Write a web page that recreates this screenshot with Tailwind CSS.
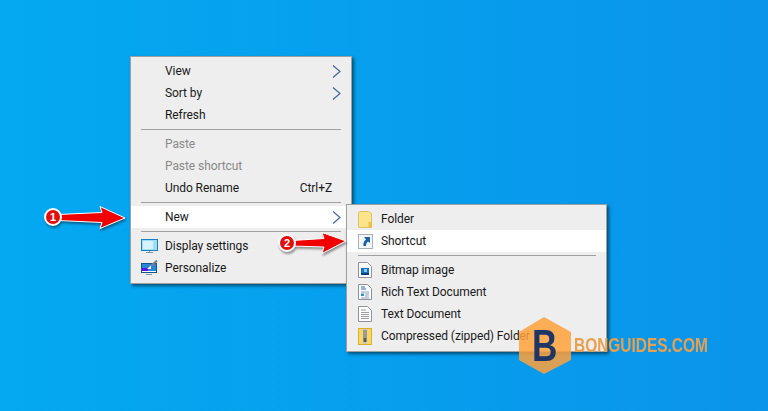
<!DOCTYPE html>
<html lang="en">
<head>
  <meta charset="UTF-8" />
  <title>New Shortcut</title>
  <script src="https://cdn.jsdelivr.net/npm/@tailwindcss/browser@4"></script>
</head>
<body class="m-0">
  <div class="relative w-[768px] h-[411px] overflow-hidden bg-linear-to-r from-[#04a9f1] to-[#0a94ea] font-['Roboto',sans-serif] text-[12px] tracking-[-0.08px] text-[#1a1a1a]">

    <!-- Desktop context menu -->
    <div class="absolute left-[130px] top-[56px] w-[222px] h-[228px] flex flex-col py-[3px] bg-[#eeeeee] border border-[#a0a0a0] shadow-[2px_2px_3px_rgba(0,0,0,0.5)]">
      <div class="flex items-center h-[22px] shrink-0 pl-[34px] pr-[10px] justify-between">
        <span>View</span>
        <svg width="9" height="13" viewBox="0 0 9 13" fill="none"><path d="M1 .5 8 6.5 1 12.5" stroke="#44689a" stroke-width="1.2"/></svg>
      </div>
      <div class="flex items-center h-[22px] shrink-0 pl-[34px] pr-[10px] justify-between">
        <span>Sort by</span>
        <svg width="9" height="13" viewBox="0 0 9 13" fill="none"><path d="M1 .5 8 6.5 1 12.5" stroke="#44689a" stroke-width="1.2"/></svg>
      </div>
      <div class="flex items-center h-[22px] shrink-0 pl-[34px]">Refresh</div>
      <div class="h-[7px] shrink-0 flex items-center pl-[10px] pr-[10px]"><div class="w-full h-px bg-[#a0a0a0]"></div></div>
      <div class="flex items-center h-[22px] shrink-0 pl-[34px] text-[#8a8a8a]">Paste</div>
      <div class="flex items-center h-[22px] shrink-0 pl-[34px] text-[#8a8a8a]">Paste shortcut</div>
      <div class="flex items-center h-[22px] shrink-0 pl-[34px] pr-[19px] justify-between">
        <span>Undo Rename</span>
        <span>Ctrl+Z</span>
      </div>
      <div class="h-[7px] shrink-0 flex items-center pl-[10px] pr-[10px]"><div class="w-full h-px bg-[#a0a0a0]"></div></div>
      <div class="flex items-center h-[22px] shrink-0 pl-[34px] pr-[10px] justify-between bg-white">
        <span>New</span>
        <svg width="9" height="13" viewBox="0 0 9 13" fill="none"><path d="M1 .5 8 6.5 1 12.5" stroke="#44689a" stroke-width="1.2"/></svg>
      </div>
      <div class="h-[7px] shrink-0 flex items-center pl-[10px] pr-[10px]"><div class="w-full h-px bg-[#a0a0a0]"></div></div>
      <div class="flex items-center h-[22px] shrink-0 pl-[10px]">
        <span class="w-[24px] shrink-0 flex">
          <svg width="17" height="15" viewBox="0 0 17 15">
            <rect x=".5" y=".5" width="16" height="11" fill="#9fdcf8" stroke="#1c7fc0"/>
            <rect x="2" y="2" width="10" height="8" fill="#d8f2fd"/>
            <path d="M5 13.500h7M8.500 12v1" stroke="#7d93a6"/>
          </svg>
        </span>
        <span>Display settings</span>
      </div>
      <div class="flex items-center h-[22px] shrink-0 pl-[10px]">
        <span class="w-[24px] shrink-0 flex">
          <svg width="17" height="16" viewBox="0 0 17 16">
            <rect x=".5" y="3.500" width="15" height="9" fill="#2a86d8" stroke="#14548f"/>
            <rect x="1" y="8" width="6" height="4" fill="#5a10e0"/>
            <path d="M1 11.500h14" stroke="#ffffff"/>
            <path d="M6 9 10 5.500 10 9z" fill="#ffffff"/>
            <path d="M10 6 16 .5" stroke="#7b7f86" stroke-width="2"/>
            <path d="M5 14.500h6" stroke="#7d93a6"/>
          </svg>
        </span>
        <span>Personalize</span>
      </div>
    </div>

    <!-- New submenu -->
    <div class="absolute left-[346px] top-[204px] w-[261px] h-[148px] flex flex-col py-[3px] bg-[#eeeeee] border border-[#a0a0a0] shadow-[2px_2px_3px_rgba(0,0,0,0.5)]">
      <div class="flex items-center h-[22px] shrink-0 pl-[11px]">
        <span class="w-[23px] shrink-0 flex">
          <svg width="15" height="17" viewBox="0 0 15 17">
            <path d="M.5 1.500 1.500.5h9l3 2v14H.5z" fill="#fce48a" stroke="#dcc06a"/>
            <rect x="10.500" y="11" width="3" height="5.500" fill="#f0c040"/>
          </svg>
        </span>
        <span>Folder</span>
      </div>
      <div class="flex items-center h-[22px] shrink-0 pl-[11px] bg-white">
        <span class="w-[23px] shrink-0 flex">
          <svg width="15" height="15" viewBox="0 0 15 15">
            <rect x=".5" y=".5" width="14" height="14" fill="#f4f6f8" stroke="#a8b0ba"/>
            <path d="M6 3h6v6l-2-1.600C8.500 8.500 8 10 8 12H5.500C5 9 6 7 8 5.500z" fill="#1c5fa8"/>
          </svg>
        </span>
        <span>Shortcut</span>
      </div>
      <div class="h-[7px] shrink-0 flex items-center pl-[11px] pr-[10px]"><div class="w-full h-px bg-[#a0a0a0]"></div></div>
      <div class="flex items-center h-[22px] shrink-0 pl-[11px]">
        <span class="w-[23px] shrink-0 flex">
          <svg width="14" height="16" viewBox="0 0 14 16">
            <path d="M.5.5h9l4 4v11H.5z" fill="#fbfbfb" stroke="#8c939c"/>
            <rect x="3" y="6" width="8" height="7" fill="#1a6fc4"/>
            <rect x="6" y="7" width="3" height="3" fill="#7fd0f5"/>
            <rect x="3" y="11" width="8" height="2" fill="#0d3d7a"/>
          </svg>
        </span>
        <span>Bitmap image</span>
      </div>
      <div class="flex items-center h-[22px] shrink-0 pl-[11px]">
        <span class="w-[23px] shrink-0 flex">
          <svg width="14" height="16" viewBox="0 0 14 16">
            <path d="M.5.5h9l4 4v11H.5z" fill="#fbfbfb" stroke="#8c939c"/>
            <path d="M3 3h4M3 5h5" stroke="#2a6fc0"/>
            <path d="M3 8h8" stroke="#8aa0b8"/>
            <rect x="3" y="9.500" width="3" height="2.500" fill="#2a8fd8"/>
            <path d="M7 10h4M7 12h4M3 14h8" stroke="#8aa0b8"/>
          </svg>
        </span>
        <span>Rich Text Document</span>
      </div>
      <div class="flex items-center h-[22px] shrink-0 pl-[11px]">
        <span class="w-[23px] shrink-0 flex">
          <svg width="14" height="16" viewBox="0 0 14 16">
            <path d="M.5.5h9l4 4v11H.5z" fill="#fbfbfb" stroke="#8c939c"/>
            <path d="M3 4h5M3 6.500h8M3 8.500h8M3 10.500h8M3 12.500h8" stroke="#9aa0a6"/>
          </svg>
        </span>
        <span>Text Document</span>
      </div>
      <div class="flex items-center h-[22px] shrink-0 pl-[11px]">
        <span class="w-[23px] shrink-0 flex">
          <svg width="14" height="17" viewBox="0 0 14 17">
            <rect x=".5" y=".5" width="13" height="16" fill="#f8d860" stroke="#d8b030"/>
            <rect x="5" y="1" width="4" height="15" fill="#c4c8cc"/>
            <path d="M5 3h4M5 5h4M5 7h4M5 9h4" stroke="#6a6e72"/>
            <rect x="5.500" y="10" width="3" height="4" fill="#55595d"/>
          </svg>
        </span>
        <span>Compressed (zipped) Folder</span>
      </div>
    </div>

    <!-- Callout arrows -->
    <svg class="absolute left-0 top-0" width="768" height="411" viewBox="0 0 768 411" style="filter:drop-shadow(1px 2px 1px rgba(0,0,0,.4))">
      <path d="M58 214.500 102 212.500 100 206.500 125 218 100 228.500 102 222.500 58 220.500z" fill="#f00000" stroke="#ffffff" stroke-width="1"/>
      <circle cx="53" cy="217" r="8" fill="#e01010" stroke="#ffffff" stroke-width="2"/>
      <path d="M292 240.500 324 238.500 322 232.500 346 241 322 253.500 324 247 292 246z" fill="#f00000" stroke="#ffffff" stroke-width="1"/>
      <circle cx="287" cy="243" r="8" fill="#e01010" stroke="#ffffff" stroke-width="2"/>
    </svg>
    <span class="absolute left-[49px] top-[209px] w-[8px] h-[16px] leading-[16px] text-center text-[11px] font-bold text-white font-['Liberation_Sans',sans-serif]">1</span>
    <span class="absolute left-[283px] top-[235px] w-[8px] h-[16px] leading-[16px] text-center text-[11px] font-bold text-white font-['Liberation_Sans',sans-serif]">2</span>

    <!-- Watermark logo -->
    <svg class="absolute left-[519px] top-[317px] opacity-85" width="52" height="57" viewBox="0 0 52 57">
      <path d="M25 0 52 15V43L25 57 0 43V15z" fill="#ffa23c"/>
    </svg>
    <span class="absolute left-[532px] top-[316px] h-[60px] leading-[60px] text-[45px] font-bold tracking-normal text-[#1f3566] origin-left scale-x-[0.78] font-['Liberation_Sans',sans-serif]">B</span>
    <span class="absolute left-[574px] top-[332px] h-[26px] leading-[26px] text-[21px] font-bold tracking-normal text-[#e9a04e] whitespace-nowrap origin-left scale-x-[0.735] font-['Liberation_Sans',sans-serif]">BONGUIDES.COM</span>
  </div>
</body>
</html>
